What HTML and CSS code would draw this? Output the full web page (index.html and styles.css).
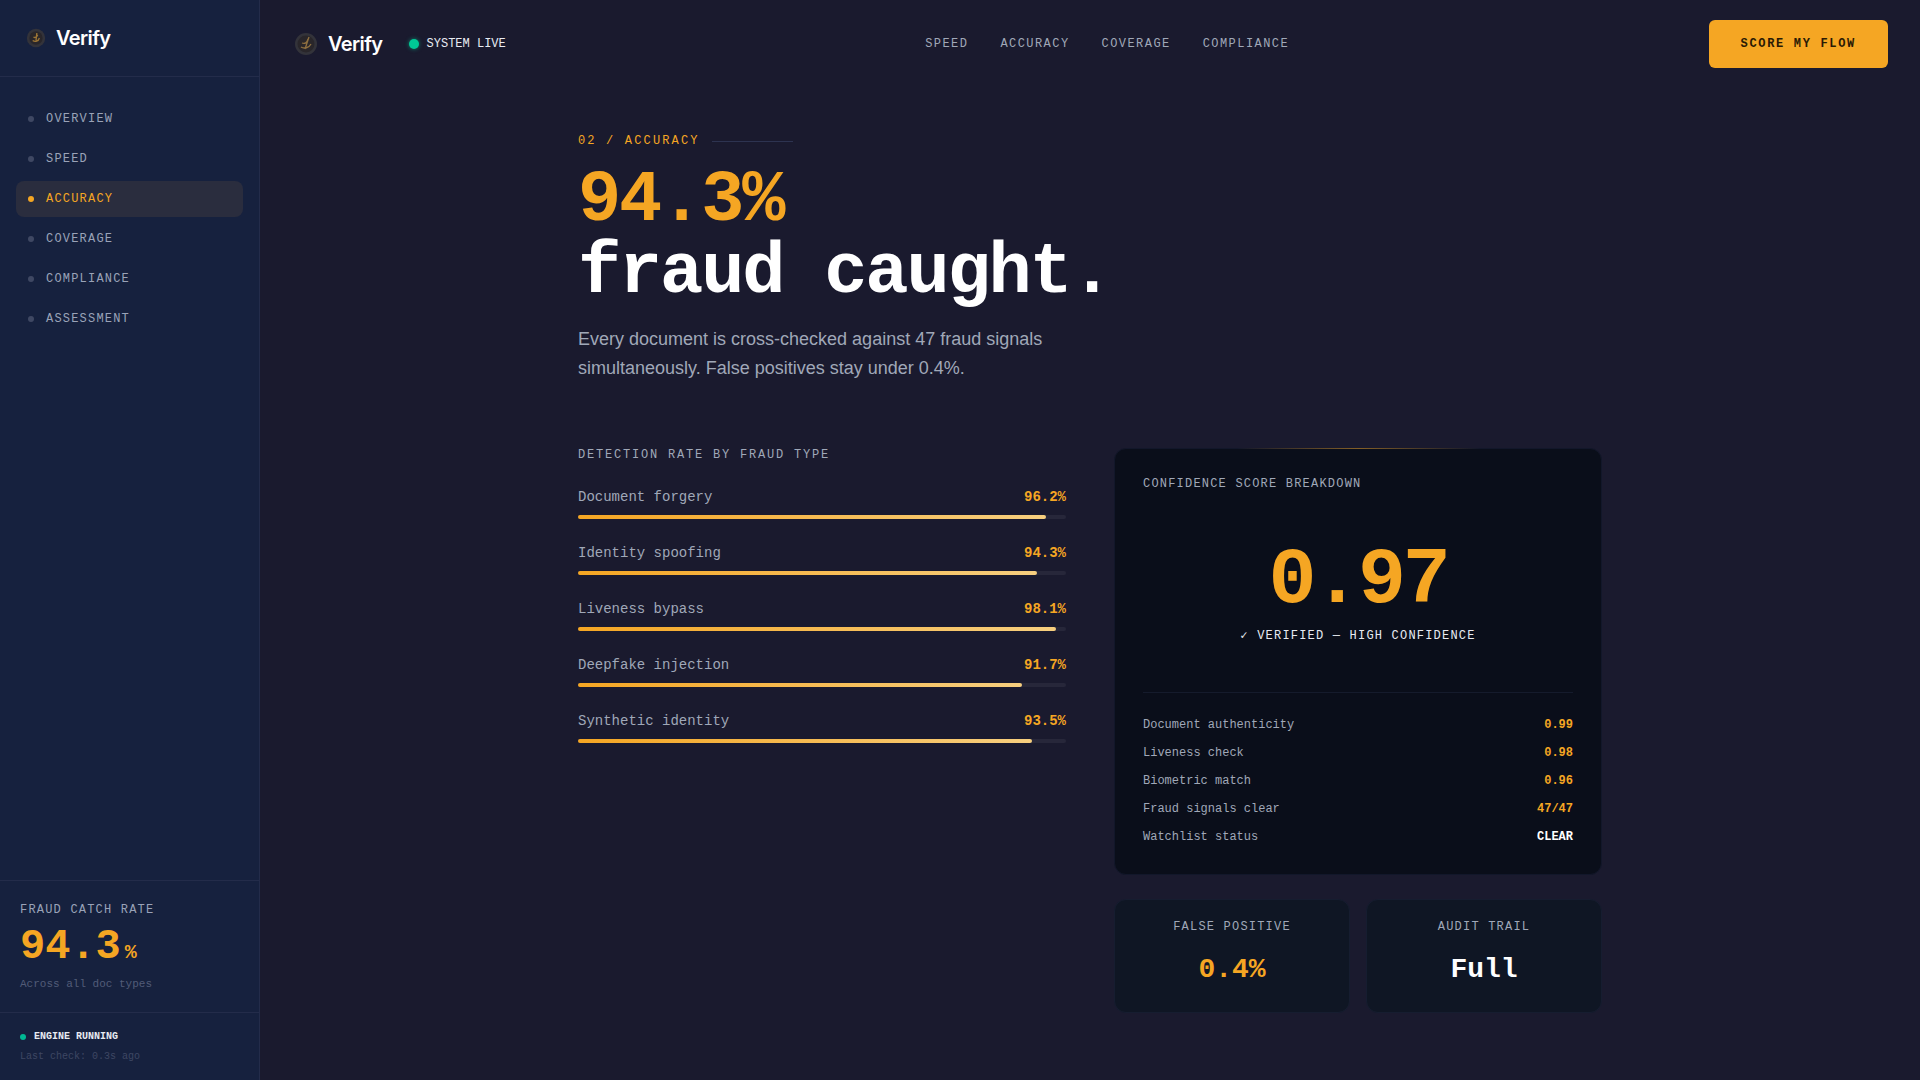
FILE: index.html
```html
<!DOCTYPE html>
<html lang="en">
<head>
<meta charset="utf-8">
<title>Verify</title>
<link rel="stylesheet" href="styles.css">
</head>
<body>
<div class="app">
  <aside class="sidebar">
    <div class="side-brand">
      <svg class="logo logo-sm" viewBox="0 0 24 24" aria-hidden="true">
        <circle cx="12" cy="12" r="11" fill="#33333a"/>
        <circle cx="12" cy="12" r="8" fill="#29262a"/>
        <path d="M8 15c3 2 7 1 8-3M9 11c2 1 4 0 5-3M13 6l-1 9" fill="none" stroke="#9c7535" stroke-width="1.6"/>
      </svg>
      <span class="brand-name">Verify</span>
    </div>
    <nav class="side-nav">
      <a class="side-link"><i class="dot"></i>OVERVIEW</a>
      <a class="side-link"><i class="dot"></i>SPEED</a>
      <a class="side-link active"><i class="dot"></i>ACCURACY</a>
      <a class="side-link"><i class="dot"></i>COVERAGE</a>
      <a class="side-link"><i class="dot"></i>COMPLIANCE</a>
      <a class="side-link"><i class="dot"></i>ASSESSMENT</a>
    </nav>
    <section class="side-stat">
      <div class="side-stat-label">FRAUD CATCH RATE</div>
      <div class="side-stat-value">94.3<span>%</span></div>
      <div class="side-stat-sub">Across all doc types</div>
    </section>
    <section class="side-status">
      <div class="engine"><i class="engine-dot"></i>ENGINE RUNNING</div>
      <div class="last-check">Last check: 0.3s ago</div>
    </section>
  </aside>
  <div class="main">
    <header class="topbar">
      <div class="top-left">
        <div class="top-brand">
          <svg class="logo logo-lg" viewBox="0 0 24 24" aria-hidden="true">
            <circle cx="12" cy="12" r="11" fill="#33333a"/>
            <circle cx="12" cy="12" r="8.5" fill="#29262a"/>
            <path d="M7 15c3 2 8 1 10-3M8 11c3 1 5 0 6-4M15 5l-4 12" fill="none" stroke="#8f7040" stroke-width="1.3"/>
          </svg>
          <span class="brand-name">Verify</span>
        </div>
        <div class="live"><i class="live-dot"></i>SYSTEM LIVE</div>
      </div>
      <nav class="top-nav">
        <a>SPEED</a><a>ACCURACY</a><a>COVERAGE</a><a>COMPLIANCE</a>
      </nav>
      <button class="cta">SCORE MY FLOW</button>
    </header>
    <main class="content">
      <div class="eyebrow"><span>02 / ACCURACY</span><i></i></div>
      <h1 class="headline"><span class="accent">94.3%</span><span>fraud caught.</span></h1>
      <p class="lede">Every document is cross-checked against 47 fraud signals simultaneously. False positives stay under 0.4%.</p>
      <div class="columns">
        <section class="rates">
          <h2 class="rates-title">DETECTION RATE BY FRAUD TYPE</h2>
          <div class="rate">
            <div class="rate-head"><span>Document forgery</span><b>96.2%</b></div>
            <div class="track"><div class="fill" style="width:95.8%"></div></div>
          </div>
          <div class="rate">
            <div class="rate-head"><span>Identity spoofing</span><b>94.3%</b></div>
            <div class="track"><div class="fill" style="width:94.1%"></div></div>
          </div>
          <div class="rate">
            <div class="rate-head"><span>Liveness bypass</span><b>98.1%</b></div>
            <div class="track"><div class="fill" style="width:97.9%"></div></div>
          </div>
          <div class="rate">
            <div class="rate-head"><span>Deepfake injection</span><b>91.7%</b></div>
            <div class="track"><div class="fill" style="width:91%"></div></div>
          </div>
          <div class="rate">
            <div class="rate-head"><span>Synthetic identity</span><b>93.5%</b></div>
            <div class="track"><div class="fill" style="width:93%"></div></div>
          </div>
        </section>
        <section class="panel">
          <div class="score-card">
            <div class="score-title">CONFIDENCE SCORE BREAKDOWN</div>
            <div class="score-value">0.97</div>
            <div class="score-verdict">✓ VERIFIED — HIGH CONFIDENCE</div>
            <div class="score-rows">
              <div class="score-row"><span>Document authenticity</span><b>0.99</b></div>
              <div class="score-row"><span>Liveness check</span><b>0.98</b></div>
              <div class="score-row"><span>Biometric match</span><b>0.96</b></div>
              <div class="score-row"><span>Fraud signals clear</span><b>47/47</b></div>
              <div class="score-row"><span>Watchlist status</span><b class="clear">CLEAR</b></div>
            </div>
          </div>
          <div class="minis">
            <div class="mini"><div class="mini-label">FALSE POSITIVE</div><div class="mini-value accent">0.4%</div></div>
            <div class="mini"><div class="mini-label">AUDIT TRAIL</div><div class="mini-value">Full</div></div>
          </div>
        </section>
      </div>
    </main>
  </div>
</div>
</body>
</html>
```
FILE: styles.css
```css
* { box-sizing: border-box; }
html, body { margin: 0; height: 100%; }
body {
  background: #1a1a2e;
  color: #fff;
  font-family: "Liberation Mono", monospace;
  overflow: hidden;
}
i { display: block; font-style: normal; }
.app { display: flex; height: 1080px; }

.sidebar {
  width: 260px;
  flex: none;
  background: #16213e;
  border-right: 1px solid #232c4a;
  display: flex;
  flex-direction: column;
}
.side-brand {
  height: 77px;
  padding: 0 0 0 26px;
  display: flex;
  align-items: center;
  gap: 10px;
  border-bottom: 1px solid #232c4a;
}
.brand-name {
  font-family: Inter, "Liberation Sans", sans-serif;
  font-weight: 600;
  font-size: 20px;
  letter-spacing: -0.03em;
  color: #fff;
}
.logo { display: block; flex: none; }
.logo-sm { width: 20px; height: 20px; }
.logo-lg { width: 24px; height: 24px; }

.side-nav {
  flex: 1;
  padding: 24px 16px 0;
  display: flex;
  flex-direction: column;
  gap: 4px;
}
.side-link {
  height: 36px;
  padding: 0 12px;
  display: flex;
  align-items: center;
  gap: 12px;
  border-radius: 8px;
  font-size: 12px;
  letter-spacing: 0.1em;
  color: #9aa3b8;
}
.dot { width: 6px; height: 6px; border-radius: 50%; background: #3f4863; }
.side-link.active { background: #2a2d3e; color: #f5a623; }
.side-link.active .dot { background: #f5a623; }

.side-stat {
  height: 132px;
  padding: 22px 20px 0;
  border-top: 1px solid #232c4a;
}
.side-stat-label { font-size: 12px; line-height: 14px; letter-spacing: 0.1em; color: #9aa3b8; }
.side-stat-value {
  margin-top: 7px;
  font-size: 42px;
  line-height: 46px;
  font-weight: 700;
  color: #f5a623;
}
.side-stat-value span { font-size: 20px; margin-left: 4px; }
.side-stat-sub { margin-top: 1px; font-size: 11px; line-height: 14px; color: #525c78; }

.side-status {
  height: 68px;
  padding: 18px 20px 0;
  border-top: 1px solid #232c4a;
}
.engine {
  display: flex;
  align-items: center;
  gap: 8px;
  font-size: 10px;
  line-height: 12px;
  font-weight: 700;
  color: #e8ebf2;
}
.engine-dot { width: 6px; height: 6px; border-radius: 50%; background: #00b894; }
.last-check { margin-top: 8px; font-size: 10px; line-height: 12px; color: #3e4763; }

.main { flex: 1; min-width: 0; display: flex; flex-direction: column; }
.topbar {
  height: 87px;
  padding: 0 32px 0 34px;
  display: flex;
  justify-content: space-between;
  align-items: center;
}
.top-left { display: flex; align-items: center; gap: 26px; }
.top-brand { display: flex; align-items: center; gap: 10px; }
.live { display: flex; align-items: center; gap: 8px; font-size: 12px; color: #e8ebf2; }
.live-dot {
  width: 10px;
  height: 10px;
  border-radius: 50%;
  background: #00c896;
  box-shadow: 0 0 4px rgba(0, 200, 150, 0.6);
}
.top-nav { display: flex; gap: 32px; font-size: 12px; letter-spacing: 0.12em; color: #a0a8b8; }
.cta {
  height: 48px;
  padding: 0 32px;
  border: 0;
  border-radius: 6px;
  background: #f5a623;
  color: #2a1a05;
  font-family: "Liberation Mono", monospace;
  font-size: 12px;
  font-weight: 700;
  letter-spacing: 0.14em;
}

.content { width: 1024px; margin: 0 auto; padding-top: 47px; }
.eyebrow { display: flex; align-items: center; gap: 12px; font-size: 12px; line-height: 14px; letter-spacing: 0.18em; color: #f5a623; }
.eyebrow i { width: 81px; height: 1px; background: #2d3350; }
.headline { margin: 17px 0 0; font-size: 72px; line-height: 72px; font-weight: 700; letter-spacing: -0.03em; }
.headline span { display: block; }
.accent { color: #f5a623; }
.lede { margin: 16px 0 0; width: 520px; font-family: "Liberation Sans", sans-serif; font-size: 18px; line-height: 29px; color: #a0a8b8; }

.columns { margin-top: 65px; display: grid; grid-template-columns: 488px 488px; gap: 48px; }
.rates-title { margin: 0 0 27px; font-size: 12px; line-height: 14px; font-weight: 400; letter-spacing: 0.15em; color: #a0a8b8; }
.rate { margin-bottom: 26px; }
.rate-head { display: flex; justify-content: space-between; font-size: 14px; line-height: 16px; color: #a0a8b8; }
.rate-head b { color: #f5a623; }
.track { margin-top: 10px; height: 4px; border-radius: 2px; background: rgba(255,255,255,0.06); }
.fill { height: 4px; border-radius: 2px; background: linear-gradient(90deg, #f5a623, #f7cf7f); }

.panel { display: flex; flex-direction: column; gap: 24px; }
.score-card {
  position: relative;
  height: 427px;
  padding: 28px;
  border: 1px solid #12172a;
  border-radius: 12px;
  background: #0a0e1a;
}
.score-card::before {
  content: "";
  position: absolute;
  top: -1px;
  left: 25%;
  right: 25%;
  height: 1px;
  background: linear-gradient(90deg, transparent, rgba(245,166,35,0.5), transparent);
}
.score-title { font-size: 12px; line-height: 14px; letter-spacing: 0.1em; color: #a0a8b8; }
.score-value {
  margin-top: 50px;
  text-align: center;
  font-size: 80px;
  line-height: 80px;
  font-weight: 700;
  letter-spacing: -0.04em;
  color: #f5a623;
}
.score-verdict { margin-top: 8px; text-align: center; font-size: 12px; line-height: 14px; letter-spacing: 0.1em; color: #e8ebf2; }
.score-rows {
  margin-top: 49px;
  padding-top: 25px;
  border-top: 1px solid #151b2c;
  display: flex;
  flex-direction: column;
  gap: 14px;
}
.score-row { display: flex; justify-content: space-between; font-size: 12px; line-height: 14px; color: #a0a8b8; }
.score-row b { color: #f5a623; }
.score-row b.clear { color: #fff; }

.minis { display: grid; grid-template-columns: 1fr 1fr; gap: 16px; }
.mini { height: 114px; padding-top: 20px; text-align: center; border: 1px solid #161d30; border-radius: 12px; background: #0f1624; }
.mini-label { font-size: 12px; line-height: 14px; letter-spacing: 0.1em; color: #a0a8b8; }
.mini-value { margin-top: 19px; font-size: 28px; line-height: 34px; font-weight: 700; }
```
